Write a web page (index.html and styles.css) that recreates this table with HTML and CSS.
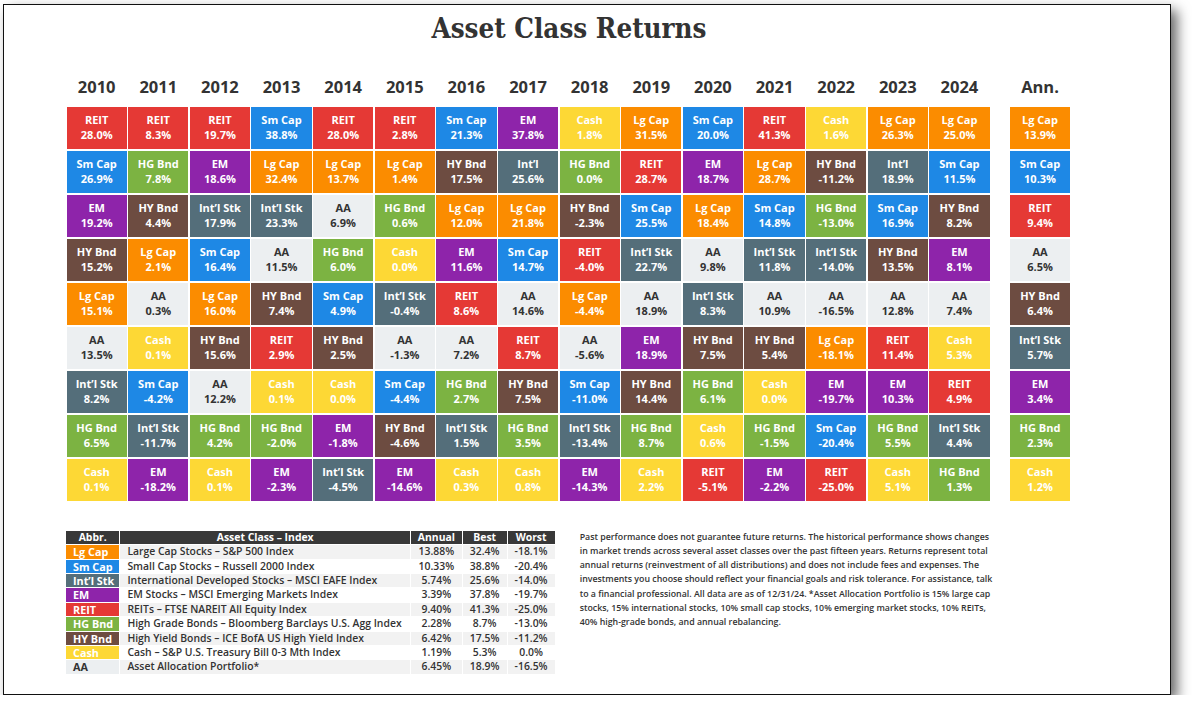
FILE: index.html
```html
<!DOCTYPE html>
<html lang="en">
<head>
<meta charset="utf-8">
<title>Asset Class Returns</title>
<link rel="stylesheet" href="styles.css">
</head>
<body>
<div class="frame">
  <div class="content">
    <h1 class="title">Asset Class Returns</h1>
    <div class="chart">
      <div class="col">
        <div class="year">2010</div>
        <div class="cells">
          <div class="cell c-reit"><span>REIT</span><span>28.0%</span></div>
          <div class="cell c-sm"><span>Sm Cap</span><span>26.9%</span></div>
          <div class="cell c-em"><span>EM</span><span>19.2%</span></div>
          <div class="cell c-hy"><span>HY Bnd</span><span>15.2%</span></div>
          <div class="cell c-lg"><span>Lg Cap</span><span>15.1%</span></div>
          <div class="cell c-aa"><span>AA</span><span>13.5%</span></div>
          <div class="cell c-intl"><span>Int’l Stk</span><span>8.2%</span></div>
          <div class="cell c-hg"><span>HG Bnd</span><span>6.5%</span></div>
          <div class="cell c-cash"><span>Cash</span><span>0.1%</span></div>
        </div>
      </div>
      <div class="col">
        <div class="year">2011</div>
        <div class="cells">
          <div class="cell c-reit"><span>REIT</span><span>8.3%</span></div>
          <div class="cell c-hg"><span>HG Bnd</span><span>7.8%</span></div>
          <div class="cell c-hy"><span>HY Bnd</span><span>4.4%</span></div>
          <div class="cell c-lg"><span>Lg Cap</span><span>2.1%</span></div>
          <div class="cell c-aa"><span>AA</span><span>0.3%</span></div>
          <div class="cell c-cash"><span>Cash</span><span>0.1%</span></div>
          <div class="cell c-sm"><span>Sm Cap</span><span>-4.2%</span></div>
          <div class="cell c-intl"><span>Int’l Stk</span><span>-11.7%</span></div>
          <div class="cell c-em"><span>EM</span><span>-18.2%</span></div>
        </div>
      </div>
      <div class="col">
        <div class="year">2012</div>
        <div class="cells">
          <div class="cell c-reit"><span>REIT</span><span>19.7%</span></div>
          <div class="cell c-em"><span>EM</span><span>18.6%</span></div>
          <div class="cell c-intl"><span>Int’l Stk</span><span>17.9%</span></div>
          <div class="cell c-sm"><span>Sm Cap</span><span>16.4%</span></div>
          <div class="cell c-lg"><span>Lg Cap</span><span>16.0%</span></div>
          <div class="cell c-hy"><span>HY Bnd</span><span>15.6%</span></div>
          <div class="cell c-aa"><span>AA</span><span>12.2%</span></div>
          <div class="cell c-hg"><span>HG Bnd</span><span>4.2%</span></div>
          <div class="cell c-cash"><span>Cash</span><span>0.1%</span></div>
        </div>
      </div>
      <div class="col">
        <div class="year">2013</div>
        <div class="cells">
          <div class="cell c-sm"><span>Sm Cap</span><span>38.8%</span></div>
          <div class="cell c-lg"><span>Lg Cap</span><span>32.4%</span></div>
          <div class="cell c-intl"><span>Int’l Stk</span><span>23.3%</span></div>
          <div class="cell c-aa"><span>AA</span><span>11.5%</span></div>
          <div class="cell c-hy"><span>HY Bnd</span><span>7.4%</span></div>
          <div class="cell c-reit"><span>REIT</span><span>2.9%</span></div>
          <div class="cell c-cash"><span>Cash</span><span>0.1%</span></div>
          <div class="cell c-hg"><span>HG Bnd</span><span>-2.0%</span></div>
          <div class="cell c-em"><span>EM</span><span>-2.3%</span></div>
        </div>
      </div>
      <div class="col">
        <div class="year">2014</div>
        <div class="cells">
          <div class="cell c-reit"><span>REIT</span><span>28.0%</span></div>
          <div class="cell c-lg"><span>Lg Cap</span><span>13.7%</span></div>
          <div class="cell c-aa"><span>AA</span><span>6.9%</span></div>
          <div class="cell c-hg"><span>HG Bnd</span><span>6.0%</span></div>
          <div class="cell c-sm"><span>Sm Cap</span><span>4.9%</span></div>
          <div class="cell c-hy"><span>HY Bnd</span><span>2.5%</span></div>
          <div class="cell c-cash"><span>Cash</span><span>0.0%</span></div>
          <div class="cell c-em"><span>EM</span><span>-1.8%</span></div>
          <div class="cell c-intl"><span>Int’l Stk</span><span>-4.5%</span></div>
        </div>
      </div>
      <div class="col">
        <div class="year">2015</div>
        <div class="cells">
          <div class="cell c-reit"><span>REIT</span><span>2.8%</span></div>
          <div class="cell c-lg"><span>Lg Cap</span><span>1.4%</span></div>
          <div class="cell c-hg"><span>HG Bnd</span><span>0.6%</span></div>
          <div class="cell c-cash"><span>Cash</span><span>0.0%</span></div>
          <div class="cell c-intl"><span>Int’l Stk</span><span>-0.4%</span></div>
          <div class="cell c-aa"><span>AA</span><span>-1.3%</span></div>
          <div class="cell c-sm"><span>Sm Cap</span><span>-4.4%</span></div>
          <div class="cell c-hy"><span>HY Bnd</span><span>-4.6%</span></div>
          <div class="cell c-em"><span>EM</span><span>-14.6%</span></div>
        </div>
      </div>
      <div class="col">
        <div class="year">2016</div>
        <div class="cells">
          <div class="cell c-sm"><span>Sm Cap</span><span>21.3%</span></div>
          <div class="cell c-hy"><span>HY Bnd</span><span>17.5%</span></div>
          <div class="cell c-lg"><span>Lg Cap</span><span>12.0%</span></div>
          <div class="cell c-em"><span>EM</span><span>11.6%</span></div>
          <div class="cell c-reit"><span>REIT</span><span>8.6%</span></div>
          <div class="cell c-aa"><span>AA</span><span>7.2%</span></div>
          <div class="cell c-hg"><span>HG Bnd</span><span>2.7%</span></div>
          <div class="cell c-intl"><span>Int’l Stk</span><span>1.5%</span></div>
          <div class="cell c-cash"><span>Cash</span><span>0.3%</span></div>
        </div>
      </div>
      <div class="col">
        <div class="year">2017</div>
        <div class="cells">
          <div class="cell c-em"><span>EM</span><span>37.8%</span></div>
          <div class="cell c-intl"><span>Int’l</span><span>25.6%</span></div>
          <div class="cell c-lg"><span>Lg Cap</span><span>21.8%</span></div>
          <div class="cell c-sm"><span>Sm Cap</span><span>14.7%</span></div>
          <div class="cell c-aa"><span>AA</span><span>14.6%</span></div>
          <div class="cell c-reit"><span>REIT</span><span>8.7%</span></div>
          <div class="cell c-hy"><span>HY Bnd</span><span>7.5%</span></div>
          <div class="cell c-hg"><span>HG Bnd</span><span>3.5%</span></div>
          <div class="cell c-cash"><span>Cash</span><span>0.8%</span></div>
        </div>
      </div>
      <div class="col">
        <div class="year">2018</div>
        <div class="cells">
          <div class="cell c-cash"><span>Cash</span><span>1.8%</span></div>
          <div class="cell c-hg"><span>HG Bnd</span><span>0.0%</span></div>
          <div class="cell c-hy"><span>HY Bnd</span><span>-2.3%</span></div>
          <div class="cell c-reit"><span>REIT</span><span>-4.0%</span></div>
          <div class="cell c-lg"><span>Lg Cap</span><span>-4.4%</span></div>
          <div class="cell c-aa"><span>AA</span><span>-5.6%</span></div>
          <div class="cell c-sm"><span>Sm Cap</span><span>-11.0%</span></div>
          <div class="cell c-intl"><span>Int’l Stk</span><span>-13.4%</span></div>
          <div class="cell c-em"><span>EM</span><span>-14.3%</span></div>
        </div>
      </div>
      <div class="col">
        <div class="year">2019</div>
        <div class="cells">
          <div class="cell c-lg"><span>Lg Cap</span><span>31.5%</span></div>
          <div class="cell c-reit"><span>REIT</span><span>28.7%</span></div>
          <div class="cell c-sm"><span>Sm Cap</span><span>25.5%</span></div>
          <div class="cell c-intl"><span>Int’l Stk</span><span>22.7%</span></div>
          <div class="cell c-aa"><span>AA</span><span>18.9%</span></div>
          <div class="cell c-em"><span>EM</span><span>18.9%</span></div>
          <div class="cell c-hy"><span>HY Bnd</span><span>14.4%</span></div>
          <div class="cell c-hg"><span>HG Bnd</span><span>8.7%</span></div>
          <div class="cell c-cash"><span>Cash</span><span>2.2%</span></div>
        </div>
      </div>
      <div class="col">
        <div class="year">2020</div>
        <div class="cells">
          <div class="cell c-sm"><span>Sm Cap</span><span>20.0%</span></div>
          <div class="cell c-em"><span>EM</span><span>18.7%</span></div>
          <div class="cell c-lg"><span>Lg Cap</span><span>18.4%</span></div>
          <div class="cell c-aa"><span>AA</span><span>9.8%</span></div>
          <div class="cell c-intl"><span>Int’l Stk</span><span>8.3%</span></div>
          <div class="cell c-hy"><span>HY Bnd</span><span>7.5%</span></div>
          <div class="cell c-hg"><span>HG Bnd</span><span>6.1%</span></div>
          <div class="cell c-cash"><span>Cash</span><span>0.6%</span></div>
          <div class="cell c-reit"><span>REIT</span><span>-5.1%</span></div>
        </div>
      </div>
      <div class="col">
        <div class="year">2021</div>
        <div class="cells">
          <div class="cell c-reit"><span>REIT</span><span>41.3%</span></div>
          <div class="cell c-lg"><span>Lg Cap</span><span>28.7%</span></div>
          <div class="cell c-sm"><span>Sm Cap</span><span>14.8%</span></div>
          <div class="cell c-intl"><span>Int’l Stk</span><span>11.8%</span></div>
          <div class="cell c-aa"><span>AA</span><span>10.9%</span></div>
          <div class="cell c-hy"><span>HY Bnd</span><span>5.4%</span></div>
          <div class="cell c-cash"><span>Cash</span><span>0.0%</span></div>
          <div class="cell c-hg"><span>HG Bnd</span><span>-1.5%</span></div>
          <div class="cell c-em"><span>EM</span><span>-2.2%</span></div>
        </div>
      </div>
      <div class="col">
        <div class="year">2022</div>
        <div class="cells">
          <div class="cell c-cash"><span>Cash</span><span>1.6%</span></div>
          <div class="cell c-hy"><span>HY Bnd</span><span>-11.2%</span></div>
          <div class="cell c-hg"><span>HG Bnd</span><span>-13.0%</span></div>
          <div class="cell c-intl"><span>Int’l Stk</span><span>-14.0%</span></div>
          <div class="cell c-aa"><span>AA</span><span>-16.5%</span></div>
          <div class="cell c-lg"><span>Lg Cap</span><span>-18.1%</span></div>
          <div class="cell c-em"><span>EM</span><span>-19.7%</span></div>
          <div class="cell c-sm"><span>Sm Cap</span><span>-20.4%</span></div>
          <div class="cell c-reit"><span>REIT</span><span>-25.0%</span></div>
        </div>
      </div>
      <div class="col">
        <div class="year">2023</div>
        <div class="cells">
          <div class="cell c-lg"><span>Lg Cap</span><span>26.3%</span></div>
          <div class="cell c-intl"><span>Int’l</span><span>18.9%</span></div>
          <div class="cell c-sm"><span>Sm Cap</span><span>16.9%</span></div>
          <div class="cell c-hy"><span>HY Bnd</span><span>13.5%</span></div>
          <div class="cell c-aa"><span>AA</span><span>12.8%</span></div>
          <div class="cell c-reit"><span>REIT</span><span>11.4%</span></div>
          <div class="cell c-em"><span>EM</span><span>10.3%</span></div>
          <div class="cell c-hg"><span>HG Bnd</span><span>5.5%</span></div>
          <div class="cell c-cash"><span>Cash</span><span>5.1%</span></div>
        </div>
      </div>
      <div class="col">
        <div class="year">2024</div>
        <div class="cells">
          <div class="cell c-lg"><span>Lg Cap</span><span>25.0%</span></div>
          <div class="cell c-sm"><span>Sm Cap</span><span>11.5%</span></div>
          <div class="cell c-hy"><span>HY Bnd</span><span>8.2%</span></div>
          <div class="cell c-em"><span>EM</span><span>8.1%</span></div>
          <div class="cell c-aa"><span>AA</span><span>7.4%</span></div>
          <div class="cell c-cash"><span>Cash</span><span>5.3%</span></div>
          <div class="cell c-reit"><span>REIT</span><span>4.9%</span></div>
          <div class="cell c-intl"><span>Int’l Stk</span><span>4.4%</span></div>
          <div class="cell c-hg"><span>HG Bnd</span><span>1.3%</span></div>
        </div>
      </div>
      <div class="col col-ann">
        <div class="year">Ann.</div>
        <div class="cells">
          <div class="cell c-lg"><span>Lg Cap</span><span>13.9%</span></div>
          <div class="cell c-sm"><span>Sm Cap</span><span>10.3%</span></div>
          <div class="cell c-reit"><span>REIT</span><span>9.4%</span></div>
          <div class="cell c-aa"><span>AA</span><span>6.5%</span></div>
          <div class="cell c-hy"><span>HY Bnd</span><span>6.4%</span></div>
          <div class="cell c-intl"><span>Int’l Stk</span><span>5.7%</span></div>
          <div class="cell c-em"><span>EM</span><span>3.4%</span></div>
          <div class="cell c-hg"><span>HG Bnd</span><span>2.3%</span></div>
          <div class="cell c-cash"><span>Cash</span><span>1.2%</span></div>
        </div>
      </div>
    </div>

    <div class="bottom">
      <table class="legend">
        <colgroup>
          <col class="w-abbr"><col class="w-name"><col class="w-ann"><col class="w-best"><col class="w-worst">
        </colgroup>
        <thead>
          <tr><th>Abbr.</th><th>Asset Class – Index</th><th>Annual</th><th>Best</th><th>Worst</th></tr>
        </thead>
        <tbody>
          <tr><td class="abbr c-lg">Lg Cap</td><td class="name">Large Cap Stocks – S&amp;P 500 Index</td><td>13.88%</td><td>32.4%</td><td>-18.1%</td></tr>
          <tr><td class="abbr c-sm">Sm Cap</td><td class="name">Small Cap Stocks – Russell 2000 Index</td><td>10.33%</td><td>38.8%</td><td>-20.4%</td></tr>
          <tr><td class="abbr c-intl">Int’l Stk</td><td class="name">International Developed Stocks – MSCI EAFE Index</td><td>5.74%</td><td>25.6%</td><td>-14.0%</td></tr>
          <tr><td class="abbr c-em">EM</td><td class="name">EM Stocks – MSCI Emerging Markets Index</td><td>3.39%</td><td>37.8%</td><td>-19.7%</td></tr>
          <tr><td class="abbr c-reit">REIT</td><td class="name">REITs – FTSE NAREIT All Equity Index</td><td>9.40%</td><td>41.3%</td><td>-25.0%</td></tr>
          <tr><td class="abbr c-hg">HG Bnd</td><td class="name">High Grade Bonds – Bloomberg Barclays U.S. Agg Index</td><td>2.28%</td><td>8.7%</td><td>-13.0%</td></tr>
          <tr><td class="abbr c-hy">HY Bnd</td><td class="name">High Yield Bonds – ICE BofA US High Yield Index</td><td>6.42%</td><td>17.5%</td><td>-11.2%</td></tr>
          <tr><td class="abbr c-cash">Cash</td><td class="name">Cash – S&amp;P U.S. Treasury Bill 0-3 Mth Index</td><td>1.19%</td><td>5.3%</td><td>0.0%</td></tr>
          <tr><td class="abbr c-aa">AA</td><td class="name">Asset Allocation Portfolio*</td><td>6.45%</td><td>18.9%</td><td>-16.5%</td></tr>
        </tbody>
      </table>
      <p class="note">Past performance does not guarantee future returns. The historical performance shows changes<br>in market trends across several asset classes over the past fifteen years. Returns represent total<br>annual returns (reinvestment of all distributions) and does not include fees and expenses. The<br>investments you choose should reflect your financial goals and risk tolerance. For assistance, talk<br>to a financial professional. All data are as of 12/31/24. *Asset Allocation Portfolio is 15% large cap<br>stocks, 15% international stocks, 10% small cap stocks, 10% emerging market stocks, 10% REITs,<br>40% high-grade bonds, and annual rebalancing.</p>
    </div>
  </div>
</div>
</body>
</html>
```

FILE: styles.css
```css
html, body {
  margin: 0;
  padding: 0;
  background: #ffffff;
}

body {
  font-family: "Open Sans", "Liberation Sans", sans-serif;
  color: #333333;
}

.frame {
  box-sizing: border-box;
  margin: 4px 0 0 3px;
  width: 1168px;
  height: 691px;
  border: 1.5px solid #111111;
  background: #ffffff;
  box-shadow: 6px 6px 12px rgba(0, 0, 0, 0.6);
  padding-top: 3px;
}

.content {
  margin-left: 62.5px;
  width: 1005px;
}

.title {
  margin: 0;
  height: 40px;
  line-height: 40px;
  text-align: center;
  font-family: "DejaVu Serif Condensed", "DejaVu Serif", serif;
  font-weight: bold;
  font-size: 27.5px;
  color: #333333;
}

.chart {
  display: flex;
  gap: 1.34px;
  margin-top: 29px;
}

.col {
  width: 60.3px;
  display: flex;
  flex-direction: column;
}

.col-ann {
  margin-left: 19px;
}

.year {
  height: 20px;
  line-height: 20px;
  margin-bottom: 9.5px;
  text-align: center;
  font-weight: 700;
  font-size: 16.5px;
  color: #333333;
}

.cells {
  display: flex;
  flex-direction: column;
  gap: 1.34px;
}

.cell {
  height: 42.7px;
  display: flex;
  flex-direction: column;
  align-items: center;
  justify-content: center;
  font-weight: 700;
  font-size: 11px;
  line-height: 14.5px;
  color: #ffffff;
  white-space: nowrap;
}

.c-reit { background: #e53935; color: #ffffff; }
.c-sm { background: #1e88e5; color: #ffffff; }
.c-em { background: #8e24aa; color: #ffffff; }
.c-hy { background: #6d4c41; color: #ffffff; }
.c-lg { background: #fb8c00; color: #ffffff; }
.c-aa { background: #eceff1; color: #333333; }
.c-intl { background: #546e7a; color: #ffffff; }
.c-hg { background: #7cb342; color: #ffffff; }
.c-cash { background: #fdd835; color: #ffffff; }

.bottom {
  display: flex;
  align-items: flex-start;
  margin-top: 28.5px;
}

.legend {
  table-layout: fixed;
  border-collapse: separate;
  border-spacing: 1.2px 1px;
  width: 490.7px;
  margin-left: -1.5px;
  font-size: 10.4px;
}

.w-abbr { width: 53.3px; }
.w-name { width: 289px; }
.w-ann { width: 50.7px; }
.w-best { width: 43.7px; }
.w-worst { width: 47px; }

.legend th {
  background: #383838;
  color: #ffffff;
  font-weight: 700;
  height: 13.4px;
  line-height: 13.4px;
  padding: 0;
  text-align: center;
}

.legend td {
  height: 13.4px;
  line-height: 13.4px;
  padding: 0;
  text-align: center;
  font-weight: 600;
  color: #333333;
  white-space: nowrap;
  overflow: hidden;
}

.legend tbody tr:nth-child(odd) td {
  background: #f2f2f2;
}

.legend tbody tr td.abbr {
  text-align: left;
  padding-left: 7px;
  font-weight: 700;
  font-size: 10.8px;
  color: #ffffff;
}

.legend tbody tr td.c-reit { background: #e53935; }
.legend tbody tr td.c-sm { background: #1e88e5; }
.legend tbody tr td.c-em { background: #8e24aa; }
.legend tbody tr td.c-hy { background: #6d4c41; }
.legend tbody tr td.c-lg { background: #fb8c00; }
.legend tbody tr td.c-aa { background: #eceff1; color: #333333; }
.legend tbody tr td.c-intl { background: #546e7a; }
.legend tbody tr td.c-hg { background: #7cb342; }
.legend tbody tr td.c-cash { background: #fdd835; }

.legend td.name {
  text-align: left;
  padding-left: 7px;
}

.note {
  margin: 0 0 0 24px;
  font-size: 8.8px;
  line-height: 14.2px;
  font-weight: 600;
  color: #333333;
  white-space: nowrap;
}
```
